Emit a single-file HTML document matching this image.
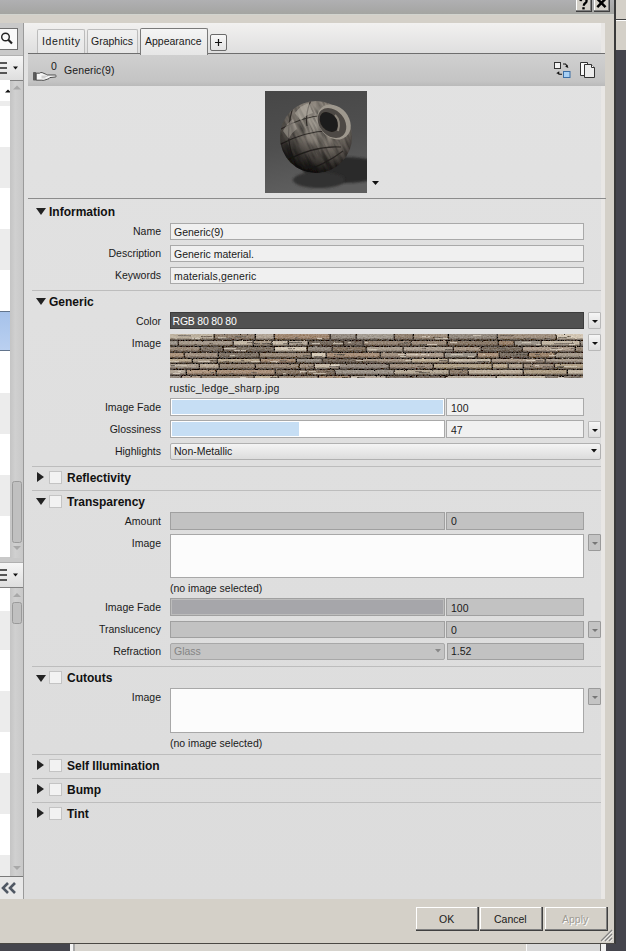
<!DOCTYPE html>
<html><head><meta charset="utf-8">
<style>
*{box-sizing:border-box;margin:0;padding:0}
html,body{width:626px;height:951px;overflow:hidden;background:#d4d0c8;font-family:"Liberation Sans",sans-serif;font-size:10.5px;color:#1a1a1a}
.a{position:absolute}
.lbl{position:absolute;right:465px;text-align:right;white-space:nowrap;line-height:12px}
.txt{position:absolute;white-space:nowrap;line-height:12px}
.box{position:absolute;border:1px solid #a9a9a9;background:#f0f0f0}
.sep{position:absolute;left:32px;width:569px;height:1px;background:#bdbdbd}
.tri-d{position:absolute;width:0;height:0;border-left:5px solid transparent;border-right:5px solid transparent;border-top:7px solid #222}
.tri-r{position:absolute;width:0;height:0;border-top:5px solid transparent;border-bottom:5px solid transparent;border-left:7px solid #222}
.chk{position:absolute;left:49px;width:13px;height:13px;border:1px solid #c4c4c4;background:#f2f2f2}
.sh{position:absolute;left:67px;font-weight:bold;font-size:12px;line-height:14px;white-space:nowrap;color:#111}
.ddb{position:absolute;left:588px;width:13px;height:17px;border:1px solid #b8b8b8;border-radius:1px;background:linear-gradient(#f6f6f6,#dcdcdc)}
.ddb:after{content:"";position:absolute;left:3px;top:7px;border-left:3px solid transparent;border-right:3px solid transparent;border-top:3px solid #111}
.ddg{position:absolute;left:588px;width:13px;height:17px;border:1px solid #9a9a9a;border-radius:1px;background:#c4c4c4}
.ddg:after{content:"";position:absolute;left:3px;top:7px;border-left:3px solid transparent;border-right:3px solid transparent;border-top:3px solid #777}
.row{position:absolute;left:0;width:10px}
</style></head><body>
<!-- top gray bar -->
<div class="a" style="left:0;top:0;width:614px;height:14px;background:linear-gradient(#b0b0b2,#aaaaaa 50%,#a4a5a1)"></div><div class="a" style="left:0;top:14px;width:614px;height:1px;background:#d2d4ce"></div>
<div class="a" style="left:576px;top:-2px;width:16px;height:14px;background:#d4d0c8;border-right:1px solid #404040;border-bottom:1px solid #404040;box-shadow:inset -1px -1px #808080, inset 1px 0 #fff"></div>
<div class="a" style="left:594px;top:-2px;width:16px;height:14px;background:#d4d0c8;border-right:1px solid #404040;border-bottom:1px solid #404040;box-shadow:inset -1px -1px #808080, inset 1px 0 #fff"></div>
<svg class="a" style="left:576px;top:0" width="34" height="12"><path d="M4.6 1.2q0.2 -2.6 3 -2.6q3 0 3 2.3q0 1.4 -1.5 2.4q-1.3 0.9 -1.3 2.5" fill="none" stroke="#000" stroke-width="2.3"/><rect x="6.3" y="7.2" width="2.4" height="2.2" fill="#000"/><path d="M21.3 -1.2l8.2 8.4M29.5 -1.2l-8.2 8.4" stroke="#000" stroke-width="2.5"/></svg>
<!-- right side -->
<div class="a" style="left:614px;top:0;width:2px;height:951px;background:#3a3a3a"></div>
<div class="a" style="left:616px;top:19px;width:10px;height:1px;background:#404040"></div>
<div class="a" style="left:616px;top:20px;width:10px;height:1px;background:#fff"></div>
<div class="a" style="left:616px;top:50px;width:10px;height:901px;background:#45454d"></div>

<!-- left panel -->
<div class="a" style="left:0;top:23px;width:23px;height:876px;background:#c9c9c9"></div>
<div class="a" style="left:23px;top:23px;width:1px;height:876px;background:#9a9a9a"></div>


<!-- search box -->
<div class="a" style="left:0;top:28px;width:18px;height:22px;border:1px solid #707070;border-left:none;background:#fafafa"></div>
<svg class="a" style="left:0;top:30px" width="18" height="18"><circle cx="5.5" cy="7" r="3.8" fill="none" stroke="#222" stroke-width="1.4"/><line x1="8.3" y1="9.8" x2="12" y2="13.5" stroke="#222" stroke-width="2.2"/></svg>
<!-- header1 -->
<div class="a" style="left:0;top:55px;width:23px;height:26px;border-top:1px solid #b0b0b0;border-bottom:1px solid #808080;background:linear-gradient(#f6f6f6,#dedede)"></div>
<svg class="a" style="left:0;top:55px" width="23" height="26"><rect x="0" y="7" width="7" height="2" fill="#555"/><rect x="0" y="12" width="7" height="2" fill="#555"/><rect x="0" y="17" width="7" height="2" fill="#555"/><path d="M13 11.5h5l-2.5 3z" fill="#111"/></svg>
<div class="row" style="top:80px;height:21px;background:#fff"></div><div class="row" style="top:101px;height:5px;background:#ececec"></div><div class="row" style="top:106px;height:41px;background:#fff"></div><div class="row" style="top:147px;height:41px;background:#ececec"></div><div class="row" style="top:188px;height:41px;background:#fff"></div><div class="row" style="top:229px;height:41px;background:#ececec"></div><div class="row" style="top:270px;height:41px;background:#fff"></div><div class="row" style="top:351px;height:42px;background:#fff"></div><div class="row" style="top:393px;height:41px;background:#ececec"></div><div class="row" style="top:434px;height:41px;background:#fff"></div><div class="row" style="top:475px;height:41px;background:#ececec"></div><div class="row" style="top:516px;height:41px;background:#fff"></div><div class="row" style="top:311px;height:40px;border-top:1px solid #62748c;border-bottom:1px solid #62748c;background:linear-gradient(#a6c2ea,#bad0f0)"></div><div class="row" style="top:588px;height:23px;background:#fff"></div><div class="row" style="top:611px;height:39px;background:#ececec"></div><div class="row" style="top:650px;height:41px;background:#fff"></div><div class="row" style="top:691px;height:41px;background:#ececec"></div><div class="row" style="top:732px;height:41px;background:#fff"></div><div class="row" style="top:773px;height:41px;background:#ececec"></div><div class="row" style="top:814px;height:41px;background:#fff"></div><div class="row" style="top:855px;height:21px;background:#ececec"></div>
<div class="a" style="left:10px;top:81px;width:13px;height:477px;background:linear-gradient(90deg,#c4c4c4,#d0d0d0 40%,#c8c8c8)"></div>
<svg class="a" style="left:10.5px;top:81px" width="12" height="477"><path d="M2 8.5h8l-4 -4z" fill="#a8a8a8"/><rect x="1.5" y="400.5" width="9" height="61" rx="2" fill="#c0c0c0" stroke="#9a9a9a"/><path d="M2 465h8l-4 4z" fill="#a8a8a8"/></svg>
<svg class="a" style="left:0;top:81px" width="10" height="20"><path d="M5 11.5h6l-3 -3z" fill="#111"/></svg>
<!-- header2 -->
<div class="a" style="left:0;top:562px;width:23px;height:26px;border-top:1px solid #b0b0b0;border-bottom:1px solid #808080;background:linear-gradient(#f6f6f6,#dedede)"></div>
<svg class="a" style="left:0;top:562px" width="23" height="26"><rect x="0" y="7" width="7" height="2" fill="#555"/><rect x="0" y="12" width="7" height="2" fill="#555"/><rect x="0" y="17" width="7" height="2" fill="#555"/><path d="M13 11.5h5l-2.5 3z" fill="#111"/></svg>
<div class="a" style="left:10px;top:588px;width:13px;height:288px;background:linear-gradient(90deg,#c4c4c4,#d0d0d0 40%,#c8c8c8)"></div>
<svg class="a" style="left:10.5px;top:588px" width="12" height="288"><path d="M2 9h8l-4 -4z" fill="#a8a8a8"/><rect x="1.5" y="14.5" width="9" height="21" rx="2" fill="#c0c0c0" stroke="#9a9a9a"/><path d="M2 278h8l-4 4z" fill="#a8a8a8"/></svg>
<div class="a" style="left:0;top:876px;width:23px;height:1px;background:#7a7a7a"></div>
<div class="a" style="left:0;top:877px;width:23px;height:22px;background:#e8e8e8"></div>
<svg class="a" style="left:0;top:877px" width="23" height="22"><path d="M8 6l-5 5l5 5M15 6l-5 5l5 5" fill="none" stroke="#505864" stroke-width="2.6"/></svg>

<!-- main panel -->
<div id="main" class="a" style="left:24px;top:23px;width:581px;height:876px;background:linear-gradient(#e2e2e2,#dcdcdc)"></div>
<div class="a" style="left:24px;top:23px;width:581px;height:31px;background:linear-gradient(#f2f1f0,#dedede)"></div>
<div class="a" style="left:601px;top:23px;width:4px;height:876px;background:#e9e7e5"></div>
<!-- tabs -->
<div class="a" style="left:37px;top:29px;width:48px;height:25px;border:1px solid #bcbcbc;border-bottom:none;border-radius:2px 2px 0 0;background:linear-gradient(#f0f0f0,#e6e6e6)"></div>
<div class="txt" style="left:42px;top:35px;letter-spacing:0.6px">Identity</div>
<div class="a" style="left:87px;top:29px;width:51px;height:25px;border:1px solid #bcbcbc;border-bottom:none;border-radius:2px 2px 0 0;background:linear-gradient(#f0f0f0,#e6e6e6)"></div>
<div class="txt" style="left:91px;top:35px">Graphics</div>
<!-- header bar -->
<div class="a" style="left:28px;top:53px;width:577px;height:1px;background:#6e6e6e"></div>
<div class="a" style="left:28px;top:54px;width:577px;height:32px;background:linear-gradient(#d0d0d0,#c4c4c4 85%,#bababa)"></div>
<div class="a" style="left:140px;top:28px;width:68px;height:27px;border:1px solid #7a7a7a;border-bottom:none;border-radius:2px 2px 0 0;background:linear-gradient(#f4f4f4,#e6e6e6)"></div>
<div class="txt" style="left:145px;top:35px">Appearance</div>
<div class="a" style="left:210px;top:34px;width:17px;height:17px;border:1px solid #6a6a6a;border-radius:2px;background:linear-gradient(#f8f8f8,#e2e2e2)"></div>
<svg class="a" style="left:210px;top:34px" width="17" height="17"><path d="M8.5 5v7M5 8.5h7" stroke="#111" stroke-width="1.2"/></svg>
<div class="txt" style="left:51px;top:60px;font-size:10.5px">0</div>
<svg class="a" style="left:32px;top:71px" width="26" height="11"><rect x="1" y="1" width="3.2" height="8.6" rx="0.8" fill="#5e5e5e"/><path d="M4.2 2.2h3.3q1.2 -1 2.6 -0.6l3.2 1.4q1.3 0.4 1.9 1h8.1q0.9 0.2 0.9 1.1q0 0.8 -0.9 0.9l-5.5 0.6q-0.6 1.3 -2.2 1.5l-3.3 1.1q-1.2 0.4 -2.4 0h-5.7z" fill="#f6f6f6" stroke="#3c3c3c" stroke-width="0.9"/><path d="M9.5 5.2h6M9.5 6.8h4" stroke="#9a9a9a" stroke-width="0.6"/></svg>
<div class="txt" style="left:64px;top:64px;letter-spacing:0.1px">Generic(9)</div>
<svg class="a" style="left:553px;top:61px" width="20" height="18"><rect x="1.5" y="1.5" width="6" height="6" fill="#f2f2f2" stroke="#333"/><path d="M10 3h2.5l1.5 1.8" fill="none" stroke="#111" stroke-width="1.1"/><path d="M12.2 5.8l3.2 1.2l-1 -3.2z" fill="#111"/><path d="M9 13.2h-3l-1.2 -1.2" fill="none" stroke="#111" stroke-width="1.1"/><path d="M3.2 12.2l3 -2l0.2 2.8z" fill="#111"/><rect x="10.5" y="10.5" width="6.5" height="6" fill="#a8d0f4" stroke="#3c6ea4"/></svg>
<svg class="a" style="left:579px;top:61px" width="18" height="18"><path d="M1.5 1.5h7v13h-7z" fill="#fafafa" stroke="#333"/><path d="M5.5 3.5h7l3 3v10h-10z" fill="#ececec" stroke="#333"/><path d="M12.5 3.5v3h3" fill="#fff" stroke="#333"/></svg>
<!-- preview -->
<svg class="a" style="left:265px;top:91px" width="102" height="102">
<defs>
<linearGradient id="bg" x1="0" y1="0" x2="0.2" y2="1"><stop offset="0" stop-color="#474747"/><stop offset="0.55" stop-color="#4f4f4f"/><stop offset="1" stop-color="#5e5e5e"/></linearGradient>
<radialGradient id="sph" cx="0.52" cy="0.28" r="0.78"><stop offset="0" stop-color="#aca69c"/><stop offset="0.35" stop-color="#8e877e"/><stop offset="0.7" stop-color="#5c5650"/><stop offset="1" stop-color="#1a1816"/></radialGradient>
<linearGradient id="dk" x1="0.7" y1="0.1" x2="0.2" y2="0.95"><stop offset="0" stop-color="#000" stop-opacity="0"/><stop offset="0.5" stop-color="#000" stop-opacity="0.05"/><stop offset="1" stop-color="#000" stop-opacity="0.7"/></linearGradient>
<filter id="bl" x="-0.2" y="-0.2" width="1.4" height="1.4"><feGaussianBlur stdDeviation="1.2"/></filter>
<filter id="grain" x="0" y="0" width="1" height="1"><feTurbulence type="fractalNoise" baseFrequency="0.3 0.05" numOctaves="2" seed="3"/><feColorMatrix type="matrix" values="0 0 0 0 0  0 0 0 0 0  0 0 0 0 0  1.1 0 0 0 -0.42"/><feComposite in2="SourceGraphic" operator="in"/></filter>
<filter id="bl2"><feGaussianBlur stdDeviation="0.55"/></filter>
<clipPath id="sc"><circle cx="51" cy="46" r="36"/></clipPath>
</defs>
<rect width="102" height="102" fill="url(#bg)"/>
<ellipse cx="80" cy="79" rx="42" ry="13" fill="#2a2a2a" filter="url(#bl)"/>
<ellipse cx="54" cy="89" rx="26" ry="8" fill="#333130" filter="url(#bl)"/>
<g filter="url(#bl2)">
<circle cx="51" cy="46" r="36" fill="url(#sph)"/>
<g clip-path="url(#sc)"><rect x="10" y="5" width="85" height="85" fill="#000" filter="url(#grain)" transform="rotate(-25 51 46)"/>
<path d="M16 38q20 -12 44 -14M14 54q26 -14 50 -14M20 70q30 -16 56 -14M34 82q26 -8 44 -22M30 10q-8 22 -6 40q2 16 10 30M46 9q-6 14 -4 26" fill="none" stroke="#2a2622" stroke-width="1.2" opacity="0.9"/>
</g>
<circle cx="51" cy="46" r="36" fill="url(#dk)"/>
<path d="M30 22q6 -8 14 -10l4 10q-8 2 -12 8z" fill="#bcb6ac" opacity="0.55"/><path d="M18 40q4 -8 10 -12l4 10q-6 4 -8 10z" fill="#b4aea4" opacity="0.45"/><ellipse cx="69" cy="31" rx="15" ry="19" transform="rotate(-40 69 31)" fill="#9e988e"/>
<ellipse cx="67" cy="32" rx="12.5" ry="16.5" transform="rotate(-40 67 32)" fill="#4e4944"/>
<ellipse cx="64" cy="31" rx="8" ry="11" transform="rotate(-40 64 31)" fill="#1e1c1a"/>
<path d="M70 24q6 6 3 16" fill="none" stroke="#8a847a" stroke-width="2"/>
</g>
</svg>
<svg class="a" style="left:372px;top:181px" width="7" height="4"><path d="M0 0h7l-3.5 4z" fill="#111"/></svg>
<div class="a" style="left:28px;top:198px;width:578px;height:1px;background:#8c8c8c"></div>

<!-- Information -->
<div class="tri-d" style="left:36px;top:208px"></div>
<div class="sh" style="left:49px;top:205px">Information</div>
<div class="lbl" style="top:225px">Name</div>
<div class="box" style="left:170px;top:223px;width:414px;height:17px"></div>
<div class="txt" style="left:174px;top:226px">Generic(9)</div>
<div class="lbl" style="top:247px">Description</div>
<div class="box" style="left:170px;top:245px;width:414px;height:17px"></div>
<div class="txt" style="left:174px;top:248px">Generic material.</div>
<div class="lbl" style="top:269px">Keywords</div>
<div class="box" style="left:170px;top:267px;width:414px;height:17px"></div>
<div class="txt" style="left:174px;top:270px;letter-spacing:0.15px">materials,generic</div>
<div class="sep" style="top:290px"></div>

<!-- Generic -->
<div class="tri-d" style="left:36px;top:298px"></div>
<div class="sh" style="left:49px;top:295px">Generic</div>
<div class="lbl" style="top:315px">Color</div>
<div class="a" style="left:170px;top:312px;width:414px;height:17px;background:#505050;border:1px solid #3c3c3c"></div>
<div class="txt" style="left:172.5px;top:315px;color:#fff;letter-spacing:-0.2px">RGB 80 80 80</div>
<div class="ddb" style="top:312px"></div>
<div class="lbl" style="top:337px">Image</div>
<div class="a" style="left:170px;top:334px;width:413px;height:44px;overflow:hidden"><svg width="413" height="44" style="display:block"><defs><filter id="sb" x="0" y="0" width="1" height="1"><feTurbulence type="fractalNoise" baseFrequency="0.25 0.5" numOctaves="2" seed="4" result="n"/><feDisplacementMap in="SourceGraphic" in2="n" scale="2" xChannelSelector="R" yChannelSelector="G" result="d"/><feTurbulence type="fractalNoise" baseFrequency="0.6 0.9" numOctaves="3" seed="9" result="n2"/><feColorMatrix in="n2" type="matrix" values="0.36 0.33 0.3 0 0  0.36 0.33 0.3 0 0  0.36 0.33 0.3 0 0  0 0 0 0 1" result="g"/><feComposite in="d" in2="g" operator="arithmetic" k1="0" k2="1" k3="0.45" k4="-0.22" result="c"/><feGaussianBlur in="c" stdDeviation="0.35"/></filter></defs><g filter="url(#sb)"><rect x="-2" y="-2" width="417" height="48" fill="#3a3129"/><rect x="-10" y="0" width="53.5" height="5.5" fill="#beb2a0"/><rect x="-10" y="4.5" width="53.5" height="1" fill="#3e3630" opacity="0.45"/><rect x="31" y="2" width="11" height="1.2" fill="#645a50" opacity="0.75"/><rect x="22" y="4" width="8" height="1.2" fill="#e0d8ca" opacity="0.75"/><rect x="8" y="1" width="13" height="1.2" fill="#6a625a" opacity="0.75"/><rect x="45" y="0" width="39.5" height="5.5" fill="#928272"/><rect x="45" y="4.5" width="39.5" height="1" fill="#3e3630" opacity="0.45"/><rect x="48" y="4" width="14" height="1.2" fill="#6a625a" opacity="0.75"/><rect x="65" y="2" width="11" height="1.2" fill="#5a544e" opacity="0.75"/><rect x="48" y="3" width="8" height="1.2" fill="#d6ccbc" opacity="0.75"/><rect x="86" y="0" width="17.5" height="5.5" fill="#b1a597"/><rect x="86" y="4.5" width="17.5" height="1" fill="#3e3630" opacity="0.45"/><rect x="105" y="0" width="54.5" height="5.5" fill="#a18973"/><rect x="105" y="4.5" width="54.5" height="1" fill="#3e3630" opacity="0.45"/><rect x="125" y="3" width="3" height="1.2" fill="#645a50" opacity="0.75"/><rect x="147" y="4" width="7" height="1.2" fill="#e0d8ca" opacity="0.75"/><rect x="161" y="0" width="24.5" height="5.5" fill="#958d83"/><rect x="161" y="4.5" width="24.5" height="1" fill="#3e3630" opacity="0.45"/><rect x="187" y="0" width="36.5" height="5.5" fill="#a39b91"/><rect x="187" y="4.5" width="36.5" height="1" fill="#3e3630" opacity="0.45"/><rect x="225" y="0" width="17.5" height="5.5" fill="#928272"/><rect x="225" y="4.5" width="17.5" height="1" fill="#3e3630" opacity="0.45"/><rect x="244" y="0" width="33.5" height="5.5" fill="#9f8f7f"/><rect x="244" y="4.5" width="33.5" height="1" fill="#3e3630" opacity="0.45"/><rect x="252" y="2" width="8" height="1.2" fill="#d6ccbc" opacity="0.75"/><rect x="265" y="4" width="13" height="1.2" fill="#e0d8ca" opacity="0.75"/><rect x="263" y="3" width="10" height="1.2" fill="#645a50" opacity="0.75"/><rect x="279" y="0" width="47.5" height="5.5" fill="#93897f"/><rect x="279" y="4.5" width="47.5" height="1" fill="#3e3630" opacity="0.45"/><rect x="283" y="4" width="3" height="1.2" fill="#e0d8ca" opacity="0.75"/><rect x="303" y="1" width="8" height="1.2" fill="#d6ccbc" opacity="0.75"/><rect x="279" y="4" width="11" height="1.2" fill="#6a625a" opacity="0.75"/><rect x="328" y="0" width="57.5" height="5.5" fill="#9f8f7f"/><rect x="328" y="4.5" width="57.5" height="1" fill="#3e3630" opacity="0.45"/><rect x="330" y="1" width="14" height="1.2" fill="#645a50" opacity="0.75"/><rect x="374" y="4" width="7" height="1.2" fill="#6a625a" opacity="0.75"/><rect x="355" y="4" width="11" height="1.2" fill="#6a625a" opacity="0.75"/><rect x="387" y="0" width="43.5" height="5.5" fill="#d1c5b3"/><rect x="387" y="4.5" width="43.5" height="1" fill="#3e3630" opacity="0.45"/><rect x="388" y="3" width="9" height="1.2" fill="#6a625a" opacity="0.75"/><rect x="397" y="2" width="4" height="1.2" fill="#6a625a" opacity="0.75"/><rect x="426" y="2" width="7" height="1.2" fill="#6a625a" opacity="0.75"/><rect x="-27" y="7" width="34.5" height="4.5" fill="#9d958b"/><rect x="-27" y="10.5" width="34.5" height="1" fill="#3e3630" opacity="0.45"/><rect x="9" y="7" width="53.5" height="4.5" fill="#a69a8c"/><rect x="9" y="10.5" width="53.5" height="1" fill="#3e3630" opacity="0.45"/><rect x="39" y="9" width="4" height="1.2" fill="#645a50" opacity="0.75"/><rect x="64" y="7" width="18.5" height="4.5" fill="#c5b9a7"/><rect x="64" y="10.5" width="18.5" height="1" fill="#3e3630" opacity="0.45"/><rect x="77" y="8" width="6" height="1.2" fill="#645a50" opacity="0.75"/><rect x="84" y="7" width="17.5" height="4.5" fill="#aa9c8a"/><rect x="84" y="10.5" width="17.5" height="1" fill="#3e3630" opacity="0.45"/><rect x="92" y="9" width="13" height="1.2" fill="#5a544e" opacity="0.75"/><rect x="97" y="9" width="5" height="1.2" fill="#5a544e" opacity="0.75"/><rect x="85" y="9" width="5" height="1.2" fill="#5a544e" opacity="0.75"/><rect x="103" y="7" width="14.5" height="4.5" fill="#c8bcaa"/><rect x="103" y="10.5" width="14.5" height="1" fill="#3e3630" opacity="0.45"/><rect x="113" y="9" width="4" height="1.2" fill="#6a625a" opacity="0.75"/><rect x="119" y="7" width="18.5" height="4.5" fill="#b5a99b"/><rect x="119" y="10.5" width="18.5" height="1" fill="#3e3630" opacity="0.45"/><rect x="119" y="8" width="13" height="1.2" fill="#5a544e" opacity="0.75"/><rect x="126" y="10" width="7" height="1.2" fill="#6a625a" opacity="0.75"/><rect x="139" y="7" width="33.5" height="4.5" fill="#766a5e"/><rect x="139" y="10.5" width="33.5" height="1" fill="#3e3630" opacity="0.45"/><rect x="142" y="9" width="8" height="1.2" fill="#e0d8ca" opacity="0.75"/><rect x="163" y="9" width="10" height="1.2" fill="#d6ccbc" opacity="0.75"/><rect x="174" y="7" width="18.5" height="4.5" fill="#786c60"/><rect x="174" y="10.5" width="18.5" height="1" fill="#3e3630" opacity="0.45"/><rect x="178" y="8" width="4" height="1.2" fill="#e0d8ca" opacity="0.75"/><rect x="194" y="7" width="46.5" height="4.5" fill="#948474"/><rect x="194" y="10.5" width="46.5" height="1" fill="#3e3630" opacity="0.45"/><rect x="228" y="9" width="10" height="1.2" fill="#6a625a" opacity="0.75"/><rect x="234" y="8" width="14" height="1.2" fill="#5a544e" opacity="0.75"/><rect x="195" y="8" width="3" height="1.2" fill="#d6ccbc" opacity="0.75"/><rect x="242" y="7" width="34.5" height="4.5" fill="#9b8b7b"/><rect x="242" y="10.5" width="34.5" height="1" fill="#3e3630" opacity="0.45"/><rect x="249" y="10" width="7" height="1.2" fill="#5a544e" opacity="0.75"/><rect x="257" y="10" width="10" height="1.2" fill="#e0d8ca" opacity="0.75"/><rect x="278" y="7" width="49.5" height="4.5" fill="#8a7a6a"/><rect x="278" y="10.5" width="49.5" height="1" fill="#3e3630" opacity="0.45"/><rect x="280" y="8" width="7" height="1.2" fill="#e0d8ca" opacity="0.75"/><rect x="329" y="7" width="14.5" height="4.5" fill="#9c846e"/><rect x="329" y="10.5" width="14.5" height="1" fill="#3e3630" opacity="0.45"/><rect x="345" y="7" width="25.5" height="4.5" fill="#9e968c"/><rect x="345" y="10.5" width="25.5" height="1" fill="#3e3630" opacity="0.45"/><rect x="352" y="8" width="9" height="1.2" fill="#d6ccbc" opacity="0.75"/><rect x="366" y="10" width="5" height="1.2" fill="#d6ccbc" opacity="0.75"/><rect x="372" y="7" width="37.5" height="4.5" fill="#c4b8a6"/><rect x="372" y="10.5" width="37.5" height="1" fill="#3e3630" opacity="0.45"/><rect x="384" y="9" width="6" height="1.2" fill="#6a625a" opacity="0.75"/><rect x="390" y="9" width="14" height="1.2" fill="#6a625a" opacity="0.75"/><rect x="399" y="10" width="6" height="1.2" fill="#e0d8ca" opacity="0.75"/><rect x="411" y="7" width="42.5" height="4.5" fill="#9e948a"/><rect x="411" y="10.5" width="42.5" height="1" fill="#3e3630" opacity="0.45"/><rect x="417" y="9" width="8" height="1.2" fill="#d6ccbc" opacity="0.75"/><rect x="428" y="8" width="6" height="1.2" fill="#5a544e" opacity="0.75"/><rect x="421" y="9" width="5" height="1.2" fill="#6a625a" opacity="0.75"/><rect x="-11" y="13" width="40.5" height="4.5" fill="#978777"/><rect x="-11" y="16.5" width="40.5" height="1" fill="#3e3630" opacity="0.45"/><rect x="31" y="13" width="21.5" height="4.5" fill="#7f7367"/><rect x="31" y="16.5" width="21.5" height="1" fill="#3e3630" opacity="0.45"/><rect x="47" y="15" width="4" height="1.2" fill="#5a544e" opacity="0.75"/><rect x="54" y="13" width="49.5" height="4.5" fill="#807468"/><rect x="54" y="16.5" width="49.5" height="1" fill="#3e3630" opacity="0.45"/><rect x="54" y="14" width="12" height="1.2" fill="#e0d8ca" opacity="0.75"/><rect x="85" y="16" width="6" height="1.2" fill="#6a625a" opacity="0.75"/><rect x="65" y="16" width="11" height="1.2" fill="#e0d8ca" opacity="0.75"/><rect x="105" y="13" width="31.5" height="4.5" fill="#d0c4b2"/><rect x="105" y="16.5" width="31.5" height="1" fill="#3e3630" opacity="0.45"/><rect x="118" y="14" width="7" height="1.2" fill="#6a625a" opacity="0.75"/><rect x="138" y="13" width="23.5" height="4.5" fill="#93897f"/><rect x="138" y="16.5" width="23.5" height="1" fill="#3e3630" opacity="0.45"/><rect x="163" y="13" width="32.5" height="4.5" fill="#887868"/><rect x="163" y="16.5" width="32.5" height="1" fill="#3e3630" opacity="0.45"/><rect x="177" y="14" width="3" height="1.2" fill="#6a625a" opacity="0.75"/><rect x="182" y="16" width="9" height="1.2" fill="#6a625a" opacity="0.75"/><rect x="197" y="13" width="35.5" height="4.5" fill="#a99d8f"/><rect x="197" y="16.5" width="35.5" height="1" fill="#3e3630" opacity="0.45"/><rect x="198" y="15" width="9" height="1.2" fill="#d6ccbc" opacity="0.75"/><rect x="234" y="13" width="48.5" height="4.5" fill="#aea294"/><rect x="234" y="16.5" width="48.5" height="1" fill="#3e3630" opacity="0.45"/><rect x="275" y="15" width="7" height="1.2" fill="#5a544e" opacity="0.75"/><rect x="252" y="14" width="4" height="1.2" fill="#645a50" opacity="0.75"/><rect x="284" y="13" width="26.5" height="4.5" fill="#a79787"/><rect x="284" y="16.5" width="26.5" height="1" fill="#3e3630" opacity="0.45"/><rect x="312" y="13" width="39.5" height="4.5" fill="#7c7064"/><rect x="312" y="16.5" width="39.5" height="1" fill="#3e3630" opacity="0.45"/><rect x="318" y="16" width="9" height="1.2" fill="#6a625a" opacity="0.75"/><rect x="328" y="14" width="8" height="1.2" fill="#5a544e" opacity="0.75"/><rect x="353" y="13" width="51.5" height="4.5" fill="#af9f8f"/><rect x="353" y="16.5" width="51.5" height="1" fill="#3e3630" opacity="0.45"/><rect x="400" y="14" width="13" height="1.2" fill="#6a625a" opacity="0.75"/><rect x="381" y="14" width="7" height="1.2" fill="#6a625a" opacity="0.75"/><rect x="380" y="15" width="12" height="1.2" fill="#d6ccbc" opacity="0.75"/><rect x="406" y="13" width="37.5" height="4.5" fill="#998979"/><rect x="406" y="16.5" width="37.5" height="1" fill="#3e3630" opacity="0.45"/><rect x="417" y="15" width="10" height="1.2" fill="#6a625a" opacity="0.75"/><rect x="-18" y="19" width="31.5" height="4.5" fill="#ac947e"/><rect x="-18" y="22.5" width="31.5" height="1" fill="#3e3630" opacity="0.45"/><rect x="15" y="19" width="32.5" height="4.5" fill="#a29282"/><rect x="15" y="22.5" width="32.5" height="1" fill="#3e3630" opacity="0.45"/><rect x="49" y="19" width="39.5" height="4.5" fill="#84786c"/><rect x="49" y="22.5" width="39.5" height="1" fill="#3e3630" opacity="0.45"/><rect x="60" y="21" width="5" height="1.2" fill="#d6ccbc" opacity="0.75"/><rect x="75" y="20" width="6" height="1.2" fill="#6a625a" opacity="0.75"/><rect x="90" y="19" width="50.5" height="4.5" fill="#9d8d7d"/><rect x="90" y="22.5" width="50.5" height="1" fill="#3e3630" opacity="0.45"/><rect x="133" y="21" width="13" height="1.2" fill="#5a544e" opacity="0.75"/><rect x="142" y="19" width="13.5" height="4.5" fill="#d6cab8"/><rect x="142" y="22.5" width="13.5" height="1" fill="#3e3630" opacity="0.45"/><rect x="144" y="22" width="8" height="1.2" fill="#6a625a" opacity="0.75"/><rect x="157" y="19" width="52.5" height="4.5" fill="#a9917b"/><rect x="157" y="22.5" width="52.5" height="1" fill="#3e3630" opacity="0.45"/><rect x="167" y="20" width="7" height="1.2" fill="#5a544e" opacity="0.75"/><rect x="164" y="20" width="11" height="1.2" fill="#5a544e" opacity="0.75"/><rect x="211" y="19" width="23.5" height="4.5" fill="#a19181"/><rect x="211" y="22.5" width="23.5" height="1" fill="#3e3630" opacity="0.45"/><rect x="228" y="20" width="13" height="1.2" fill="#e0d8ca" opacity="0.75"/><rect x="230" y="22" width="6" height="1.2" fill="#5a544e" opacity="0.75"/><rect x="230" y="22" width="12" height="1.2" fill="#e0d8ca" opacity="0.75"/><rect x="236" y="19" width="37.5" height="4.5" fill="#af9f8f"/><rect x="236" y="22.5" width="37.5" height="1" fill="#3e3630" opacity="0.45"/><rect x="237" y="20" width="10" height="1.2" fill="#d6ccbc" opacity="0.75"/><rect x="245" y="20" width="14" height="1.2" fill="#e0d8ca" opacity="0.75"/><rect x="275" y="19" width="31.5" height="4.5" fill="#9c948a"/><rect x="275" y="22.5" width="31.5" height="1" fill="#3e3630" opacity="0.45"/><rect x="298" y="22" width="6" height="1.2" fill="#d6ccbc" opacity="0.75"/><rect x="281" y="20" width="12" height="1.2" fill="#d6ccbc" opacity="0.75"/><rect x="308" y="19" width="20.5" height="4.5" fill="#ab937d"/><rect x="308" y="22.5" width="20.5" height="1" fill="#3e3630" opacity="0.45"/><rect x="312" y="20" width="3" height="1.2" fill="#d6ccbc" opacity="0.75"/><rect x="330" y="19" width="27.5" height="4.5" fill="#7e7266"/><rect x="330" y="22.5" width="27.5" height="1" fill="#3e3630" opacity="0.45"/><rect x="345" y="22" width="4" height="1.2" fill="#645a50" opacity="0.75"/><rect x="341" y="21" width="7" height="1.2" fill="#6a625a" opacity="0.75"/><rect x="346" y="20" width="11" height="1.2" fill="#5a544e" opacity="0.75"/><rect x="359" y="19" width="25.5" height="4.5" fill="#9e8670"/><rect x="359" y="22.5" width="25.5" height="1" fill="#3e3630" opacity="0.45"/><rect x="365" y="20" width="6" height="1.2" fill="#5a544e" opacity="0.75"/><rect x="379" y="21" width="8" height="1.2" fill="#d6ccbc" opacity="0.75"/><rect x="386" y="19" width="47.5" height="4.5" fill="#a79b8d"/><rect x="386" y="22.5" width="47.5" height="1" fill="#3e3630" opacity="0.45"/><rect x="-27" y="25" width="48.5" height="3.5" fill="#b8a890"/><rect x="-27" y="27.5" width="48.5" height="1" fill="#3e3630" opacity="0.45"/><rect x="-4" y="27" width="9" height="1.2" fill="#d6ccbc" opacity="0.75"/><rect x="5" y="27" width="4" height="1.2" fill="#e0d8ca" opacity="0.75"/><rect x="23" y="25" width="23.5" height="3.5" fill="#aa9c8a"/><rect x="23" y="27.5" width="23.5" height="1" fill="#3e3630" opacity="0.45"/><rect x="40" y="26" width="7" height="1.2" fill="#645a50" opacity="0.75"/><rect x="28" y="27" width="12" height="1.2" fill="#e0d8ca" opacity="0.75"/><rect x="48" y="25" width="41.5" height="3.5" fill="#b6a68e"/><rect x="48" y="27.5" width="41.5" height="1" fill="#3e3630" opacity="0.45"/><rect x="53" y="27" width="6" height="1.2" fill="#645a50" opacity="0.75"/><rect x="81" y="27" width="9" height="1.2" fill="#d6ccbc" opacity="0.75"/><rect x="71" y="26" width="3" height="1.2" fill="#645a50" opacity="0.75"/><rect x="91" y="25" width="34.5" height="3.5" fill="#a68e78"/><rect x="91" y="27.5" width="34.5" height="1" fill="#3e3630" opacity="0.45"/><rect x="110" y="26" width="7" height="1.2" fill="#6a625a" opacity="0.75"/><rect x="100" y="27" width="8" height="1.2" fill="#d6ccbc" opacity="0.75"/><rect x="127" y="25" width="24.5" height="3.5" fill="#9b9389"/><rect x="127" y="27.5" width="24.5" height="1" fill="#3e3630" opacity="0.45"/><rect x="153" y="25" width="38.5" height="3.5" fill="#796d61"/><rect x="153" y="27.5" width="38.5" height="1" fill="#3e3630" opacity="0.45"/><rect x="186" y="26" width="13" height="1.2" fill="#d6ccbc" opacity="0.75"/><rect x="193" y="25" width="47.5" height="3.5" fill="#a49484"/><rect x="193" y="27.5" width="47.5" height="1" fill="#3e3630" opacity="0.45"/><rect x="235" y="26" width="7" height="1.2" fill="#d6ccbc" opacity="0.75"/><rect x="194" y="27" width="13" height="1.2" fill="#645a50" opacity="0.75"/><rect x="242" y="25" width="35.5" height="3.5" fill="#c1b199"/><rect x="242" y="27.5" width="35.5" height="1" fill="#3e3630" opacity="0.45"/><rect x="269" y="26" width="8" height="1.2" fill="#5a544e" opacity="0.75"/><rect x="279" y="25" width="41.5" height="3.5" fill="#c6baa8"/><rect x="279" y="27.5" width="41.5" height="1" fill="#3e3630" opacity="0.45"/><rect x="283" y="26" width="8" height="1.2" fill="#d6ccbc" opacity="0.75"/><rect x="307" y="27" width="12" height="1.2" fill="#5a544e" opacity="0.75"/><rect x="322" y="25" width="52.5" height="3.5" fill="#ad9d8d"/><rect x="322" y="27.5" width="52.5" height="1" fill="#3e3630" opacity="0.45"/><rect x="366" y="26" width="7" height="1.2" fill="#6a625a" opacity="0.75"/><rect x="357" y="26" width="8" height="1.2" fill="#e0d8ca" opacity="0.75"/><rect x="376" y="25" width="40.5" height="3.5" fill="#ab9f91"/><rect x="376" y="27.5" width="40.5" height="1" fill="#3e3630" opacity="0.45"/><rect x="-1" y="30" width="29.5" height="4.5" fill="#aa9e90"/><rect x="-1" y="33.5" width="29.5" height="1" fill="#3e3630" opacity="0.45"/><rect x="1" y="31" width="10" height="1.2" fill="#5a544e" opacity="0.75"/><rect x="5" y="31" width="12" height="1.2" fill="#d6ccbc" opacity="0.75"/><rect x="30" y="30" width="18.5" height="4.5" fill="#b9ab99"/><rect x="30" y="33.5" width="18.5" height="1" fill="#3e3630" opacity="0.45"/><rect x="50" y="30" width="34.5" height="4.5" fill="#9a8a7a"/><rect x="50" y="33.5" width="34.5" height="1" fill="#3e3630" opacity="0.45"/><rect x="86" y="30" width="42.5" height="4.5" fill="#9e8e7e"/><rect x="86" y="33.5" width="42.5" height="1" fill="#3e3630" opacity="0.45"/><rect x="130" y="30" width="13.5" height="4.5" fill="#a39383"/><rect x="130" y="33.5" width="13.5" height="1" fill="#3e3630" opacity="0.45"/><rect x="138" y="32" width="14" height="1.2" fill="#645a50" opacity="0.75"/><rect x="145" y="30" width="23.5" height="4.5" fill="#c4b8a6"/><rect x="145" y="33.5" width="23.5" height="1" fill="#3e3630" opacity="0.45"/><rect x="161" y="31" width="10" height="1.2" fill="#e0d8ca" opacity="0.75"/><rect x="159" y="32" width="12" height="1.2" fill="#6a625a" opacity="0.75"/><rect x="170" y="30" width="48.5" height="4.5" fill="#968c82"/><rect x="170" y="33.5" width="48.5" height="1" fill="#3e3630" opacity="0.45"/><rect x="220" y="30" width="42.5" height="4.5" fill="#a29282"/><rect x="220" y="33.5" width="42.5" height="1" fill="#3e3630" opacity="0.45"/><rect x="247" y="32" width="8" height="1.2" fill="#645a50" opacity="0.75"/><rect x="264" y="30" width="57.5" height="4.5" fill="#b4a48c"/><rect x="264" y="33.5" width="57.5" height="1" fill="#3e3630" opacity="0.45"/><rect x="287" y="33" width="11" height="1.2" fill="#6a625a" opacity="0.75"/><rect x="323" y="30" width="14.5" height="4.5" fill="#b9a991"/><rect x="323" y="33.5" width="14.5" height="1" fill="#3e3630" opacity="0.45"/><rect x="339" y="30" width="13.5" height="4.5" fill="#b4a694"/><rect x="339" y="33.5" width="13.5" height="1" fill="#3e3630" opacity="0.45"/><rect x="354" y="30" width="29.5" height="4.5" fill="#9d8d7d"/><rect x="354" y="33.5" width="29.5" height="1" fill="#3e3630" opacity="0.45"/><rect x="373" y="32" width="10" height="1.2" fill="#6a625a" opacity="0.75"/><rect x="360" y="32" width="3" height="1.2" fill="#5a544e" opacity="0.75"/><rect x="365" y="31" width="4" height="1.2" fill="#e0d8ca" opacity="0.75"/><rect x="385" y="30" width="34.5" height="4.5" fill="#b1a189"/><rect x="385" y="33.5" width="34.5" height="1" fill="#3e3630" opacity="0.45"/><rect x="387" y="32" width="8" height="1.2" fill="#5a544e" opacity="0.75"/><rect x="394" y="32" width="13" height="1.2" fill="#d6ccbc" opacity="0.75"/><rect x="385" y="33" width="8" height="1.2" fill="#5a544e" opacity="0.75"/><rect x="-8" y="36" width="23.5" height="4.5" fill="#b3a799"/><rect x="-8" y="39.5" width="23.5" height="1" fill="#3e3630" opacity="0.45"/><rect x="8" y="37" width="3" height="1.2" fill="#e0d8ca" opacity="0.75"/><rect x="-4" y="38" width="3" height="1.2" fill="#d6ccbc" opacity="0.75"/><rect x="3" y="39" width="7" height="1.2" fill="#e0d8ca" opacity="0.75"/><rect x="17" y="36" width="28.5" height="4.5" fill="#ad957f"/><rect x="17" y="39.5" width="28.5" height="1" fill="#3e3630" opacity="0.45"/><rect x="41" y="38" width="3" height="1.2" fill="#5a544e" opacity="0.75"/><rect x="47" y="36" width="57.5" height="4.5" fill="#a9917b"/><rect x="47" y="39.5" width="57.5" height="1" fill="#3e3630" opacity="0.45"/><rect x="59" y="39" width="5" height="1.2" fill="#645a50" opacity="0.75"/><rect x="81" y="38" width="6" height="1.2" fill="#6a625a" opacity="0.75"/><rect x="106" y="36" width="29.5" height="4.5" fill="#8a7a6a"/><rect x="106" y="39.5" width="29.5" height="1" fill="#3e3630" opacity="0.45"/><rect x="130" y="37" width="9" height="1.2" fill="#e0d8ca" opacity="0.75"/><rect x="113" y="39" width="3" height="1.2" fill="#d6ccbc" opacity="0.75"/><rect x="137" y="36" width="27.5" height="4.5" fill="#857565"/><rect x="137" y="39.5" width="27.5" height="1" fill="#3e3630" opacity="0.45"/><rect x="139" y="37" width="7" height="1.2" fill="#d6ccbc" opacity="0.75"/><rect x="155" y="37" width="10" height="1.2" fill="#645a50" opacity="0.75"/><rect x="143" y="39" width="13" height="1.2" fill="#d6ccbc" opacity="0.75"/><rect x="166" y="36" width="57.5" height="4.5" fill="#9d958b"/><rect x="166" y="39.5" width="57.5" height="1" fill="#3e3630" opacity="0.45"/><rect x="225" y="36" width="53.5" height="4.5" fill="#b6aa98"/><rect x="225" y="39.5" width="53.5" height="1" fill="#3e3630" opacity="0.45"/><rect x="245" y="37" width="7" height="1.2" fill="#645a50" opacity="0.75"/><rect x="249" y="38" width="11" height="1.2" fill="#5a544e" opacity="0.75"/><rect x="280" y="36" width="17.5" height="4.5" fill="#908070"/><rect x="280" y="39.5" width="17.5" height="1" fill="#3e3630" opacity="0.45"/><rect x="289" y="38" width="3" height="1.2" fill="#6a625a" opacity="0.75"/><rect x="299" y="36" width="53.5" height="4.5" fill="#beb09e"/><rect x="299" y="39.5" width="53.5" height="1" fill="#3e3630" opacity="0.45"/><rect x="354" y="36" width="42.5" height="4.5" fill="#b0a088"/><rect x="354" y="39.5" width="42.5" height="1" fill="#3e3630" opacity="0.45"/><rect x="398" y="36" width="38.5" height="4.5" fill="#c3b7a5"/><rect x="398" y="39.5" width="38.5" height="1" fill="#3e3630" opacity="0.45"/><rect x="-28" y="42" width="38.5" height="3.5" fill="#948a80"/><rect x="-28" y="44.5" width="38.5" height="1" fill="#3e3630" opacity="0.45"/><rect x="-21" y="44" width="6" height="1.2" fill="#6a625a" opacity="0.75"/><rect x="-25" y="43" width="5" height="1.2" fill="#645a50" opacity="0.75"/><rect x="-10" y="43" width="6" height="1.2" fill="#d6ccbc" opacity="0.75"/><rect x="12" y="42" width="18.5" height="3.5" fill="#ad9d8d"/><rect x="12" y="44.5" width="18.5" height="1" fill="#3e3630" opacity="0.45"/><rect x="32" y="42" width="51.5" height="3.5" fill="#9c8c7c"/><rect x="32" y="44.5" width="51.5" height="1" fill="#3e3630" opacity="0.45"/><rect x="70" y="43" width="6" height="1.2" fill="#e0d8ca" opacity="0.75"/><rect x="85" y="42" width="22.5" height="3.5" fill="#c0b098"/><rect x="85" y="44.5" width="22.5" height="1" fill="#3e3630" opacity="0.45"/><rect x="100" y="43" width="7" height="1.2" fill="#5a544e" opacity="0.75"/><rect x="109" y="42" width="38.5" height="3.5" fill="#9c8c7c"/><rect x="109" y="44.5" width="38.5" height="1" fill="#3e3630" opacity="0.45"/><rect x="120" y="44" width="7" height="1.2" fill="#5a544e" opacity="0.75"/><rect x="149" y="42" width="30.5" height="3.5" fill="#a48c76"/><rect x="149" y="44.5" width="30.5" height="1" fill="#3e3630" opacity="0.45"/><rect x="163" y="43" width="3" height="1.2" fill="#6a625a" opacity="0.75"/><rect x="172" y="43" width="6" height="1.2" fill="#5a544e" opacity="0.75"/><rect x="181" y="42" width="34.5" height="3.5" fill="#b2a698"/><rect x="181" y="44.5" width="34.5" height="1" fill="#3e3630" opacity="0.45"/><rect x="181" y="43" width="6" height="1.2" fill="#d6ccbc" opacity="0.75"/><rect x="187" y="43" width="8" height="1.2" fill="#5a544e" opacity="0.75"/><rect x="185" y="44" width="11" height="1.2" fill="#6a625a" opacity="0.75"/><rect x="217" y="42" width="57.5" height="3.5" fill="#776b5f"/><rect x="217" y="44.5" width="57.5" height="1" fill="#3e3630" opacity="0.45"/><rect x="276" y="42" width="49.5" height="3.5" fill="#b3a799"/><rect x="276" y="44.5" width="49.5" height="1" fill="#3e3630" opacity="0.45"/><rect x="281" y="44" width="4" height="1.2" fill="#d6ccbc" opacity="0.75"/><rect x="316" y="44" width="9" height="1.2" fill="#6a625a" opacity="0.75"/><rect x="305" y="44" width="8" height="1.2" fill="#e0d8ca" opacity="0.75"/><rect x="327" y="42" width="48.5" height="3.5" fill="#c5b9a7"/><rect x="327" y="44.5" width="48.5" height="1" fill="#3e3630" opacity="0.45"/><rect x="344" y="44" width="5" height="1.2" fill="#e0d8ca" opacity="0.75"/><rect x="369" y="44" width="7" height="1.2" fill="#5a544e" opacity="0.75"/><rect x="341" y="44" width="11" height="1.2" fill="#5a544e" opacity="0.75"/><rect x="377" y="42" width="32.5" height="3.5" fill="#867a6e"/><rect x="377" y="44.5" width="32.5" height="1" fill="#3e3630" opacity="0.45"/><rect x="401" y="43" width="13" height="1.2" fill="#6a625a" opacity="0.75"/><rect x="393" y="44" width="13" height="1.2" fill="#5a544e" opacity="0.75"/><rect x="388" y="43" width="6" height="1.2" fill="#e0d8ca" opacity="0.75"/><rect x="411" y="42" width="39.5" height="3.5" fill="#968676"/><rect x="411" y="44.5" width="39.5" height="1" fill="#3e3630" opacity="0.45"/><rect x="420" y="43" width="5" height="1.2" fill="#6a625a" opacity="0.75"/><rect x="443" y="44" width="7" height="1.2" fill="#e0d8ca" opacity="0.75"/><rect x="431" y="44" width="14" height="1.2" fill="#5a544e" opacity="0.75"/></g></svg></div>
<div class="ddb" style="top:334px"></div>
<div class="txt" style="left:169.5px;top:382px;letter-spacing:0.2px">rustic_ledge_sharp.jpg</div>
<div class="lbl" style="top:401px">Image Fade</div>
<div class="a" style="left:170px;top:398px;width:275px;height:18px;border:1px solid #a9a9a9;background:#c6def4;box-shadow:inset 0 0 0 1px #fff"></div>
<div class="box" style="left:446px;top:398px;width:138px;height:18px"></div>
<div class="txt" style="left:451px;top:402px">100</div>
<div class="lbl" style="top:423px">Glossiness</div>
<div class="a" style="left:170px;top:420px;width:275px;height:18px;border:1px solid #a9a9a9;background:#fff"></div>
<div class="a" style="left:172px;top:422px;width:127px;height:14px;background:#c6def4"></div>
<div class="box" style="left:446px;top:420px;width:138px;height:18px"></div>
<div class="txt" style="left:451px;top:424px">47</div>
<div class="ddb" style="top:421px"></div>
<div class="lbl" style="top:445px">Highlights</div>
<div class="a" style="left:170px;top:443px;width:431px;height:17px;border:1px solid #b0b0b0;border-radius:2px;background:linear-gradient(#f4f4f4,#dcdcdc)"></div>
<div class="txt" style="left:174px;top:445px">Non-Metallic</div>
<svg class="a" style="left:591px;top:449px" width="6" height="4"><path d="M0 0h6l-3 3.5z" fill="#111"/></svg>
<div class="sep" style="top:466px"></div>

<!-- Reflectivity -->
<div class="tri-r" style="left:37px;top:472px"></div>
<div class="chk" style="top:471px"></div>
<div class="sh" style="top:471px">Reflectivity</div>
<div class="sep" style="top:490px"></div>

<!-- Transparency -->
<div class="tri-d" style="left:36px;top:498px"></div>
<div class="chk" style="top:495px"></div>
<div class="sh" style="top:495px">Transparency</div>
<div class="lbl" style="top:515px">Amount</div>
<div class="a" style="left:170px;top:512px;width:275px;height:18px;border:1px solid #a0a0a0;background:#c2c2c2"></div>
<div class="a" style="left:446px;top:512px;width:138px;height:18px;border:1px solid #a0a0a0;background:#c2c2c2"></div>
<div class="txt" style="left:451px;top:515px">0</div>
<div class="lbl" style="top:537px">Image</div>
<div class="a" style="left:170px;top:534px;width:414px;height:44px;border:1px solid #a8a8a8;background:#fcfcfc"></div>
<div class="ddg" style="top:534px"></div>
<div class="txt" style="left:170px;top:582px">(no image selected)</div>
<div class="lbl" style="top:601px">Image Fade</div>
<div class="a" style="left:170px;top:598px;width:275px;height:18px;border:1px solid #a0a0a0;background:#a6a6aa;box-shadow:inset 0 0 0 1px #bcbcbc"></div>
<div class="a" style="left:446px;top:598px;width:138px;height:18px;border:1px solid #a0a0a0;background:#c2c2c2"></div>
<div class="txt" style="left:451px;top:602px">100</div>
<div class="lbl" style="top:623px">Translucency</div>
<div class="a" style="left:170px;top:621px;width:275px;height:17px;border:1px solid #a0a0a0;background:#c2c2c2"></div>
<div class="a" style="left:446px;top:621px;width:138px;height:17px;border:1px solid #a0a0a0;background:#c2c2c2"></div>
<div class="txt" style="left:451px;top:624px">0</div>
<div class="ddg" style="top:621px"></div>
<div class="lbl" style="top:645px">Refraction</div>
<div class="a" style="left:170px;top:643px;width:275px;height:17px;border:1px solid #a8a8a8;border-radius:2px;background:#c4c4c4"></div>
<div class="txt" style="left:174px;top:645px;color:#858585">Glass</div>
<svg class="a" style="left:435px;top:649px" width="6" height="4"><path d="M0 0h6l-3 3.5z" fill="#888"/></svg>
<div class="a" style="left:447px;top:643px;width:137px;height:17px;border:1px solid #a0a0a0;background:#c2c2c2"></div>
<div class="txt" style="left:451px;top:645px">1.52</div>
<div class="sep" style="top:666px"></div>

<!-- Cutouts -->
<div class="tri-d" style="left:36px;top:675px"></div>
<div class="chk" style="top:671px"></div>
<div class="sh" style="top:671px">Cutouts</div>
<div class="lbl" style="top:691px">Image</div>
<div class="a" style="left:170px;top:688px;width:414px;height:45px;border:1px solid #a8a8a8;background:#fcfcfc"></div>
<div class="ddg" style="top:688px"></div>
<div class="txt" style="left:170px;top:737px">(no image selected)</div>
<div class="sep" style="top:754px"></div>

<div class="tri-r" style="left:37px;top:760px"></div>
<div class="chk" style="top:759px"></div>
<div class="sh" style="top:759px">Self Illumination</div>
<div class="sep" style="top:778px"></div>
<div class="tri-r" style="left:37px;top:784px"></div>
<div class="chk" style="top:783px"></div>
<div class="sh" style="top:783px">Bump</div>
<div class="sep" style="top:802px"></div>
<div class="tri-r" style="left:37px;top:808px"></div>
<div class="chk" style="top:807px"></div>
<div class="sh" style="top:807px">Tint</div>


<!-- bottom strip -->
<div class="a" style="left:0;top:943px;width:615px;height:1px;background:#4a4844"></div>
<div class="a" style="left:0;top:944px;width:70px;height:7px;background:#45454d"></div>
<div class="a" style="left:70px;top:944px;width:3px;height:7px;background:#f4f4f4"></div>
<div class="a" style="left:73px;top:944px;width:2px;height:7px;background:#a8a8a8"></div>
<div class="a" style="left:75px;top:944px;width:452px;height:7px;background:#d6d3cd"></div>
<div class="a" style="left:526px;top:944px;width:1px;height:7px;background:#f8f8f8"></div>
<div class="a" style="left:527px;top:944px;width:73px;height:7px;background:#d8d8d8"></div>
<div class="a" style="left:600px;top:944px;width:1px;height:7px;background:#555"></div>
<div class="a" style="left:601px;top:944px;width:5px;height:7px;background:#f0f0f0"></div>
<div class="a" style="left:606px;top:944px;width:20px;height:7px;background:#45454d"></div>
<svg class="a" style="left:598px;top:928px" width="16" height="15"><path d="M3 13l11 -11M7 13l7 -7M11 13l3 -3" stroke="#808080" stroke-width="1.2"/><path d="M4 13.8l10.5 -10.5M8 13.8l6.5 -6.5M12 13.8l2.5 -2.5" stroke="#fff" stroke-width="0.8"/></svg>
<!-- buttons -->
<div class="a" style="left:416px;top:907px;width:63px;height:24px;background:#d4d0c8;border-right:1px solid #404040;border-bottom:1px solid #404040;box-shadow:inset -1px -1px #808080, inset 1px 1px #fff"></div>
<div class="txt" style="left:439px;top:913px">OK</div>
<div class="a" style="left:480px;top:907px;width:63px;height:24px;background:#d4d0c8;border-right:1px solid #404040;border-bottom:1px solid #404040;box-shadow:inset -1px -1px #808080, inset 1px 1px #fff"></div>
<div class="txt" style="left:494px;top:913px">Cancel</div>
<div class="a" style="left:545px;top:907px;width:63px;height:24px;background:#d4d0c8;border-right:1px solid #404040;border-bottom:1px solid #404040;box-shadow:inset -1px -1px #808080, inset 1px 1px #fff"></div>
<div class="txt" style="left:563px;top:914px;color:#fff">Apply</div><div class="txt" style="left:562px;top:913px;color:#a09c94">Apply</div>

</body></html>
